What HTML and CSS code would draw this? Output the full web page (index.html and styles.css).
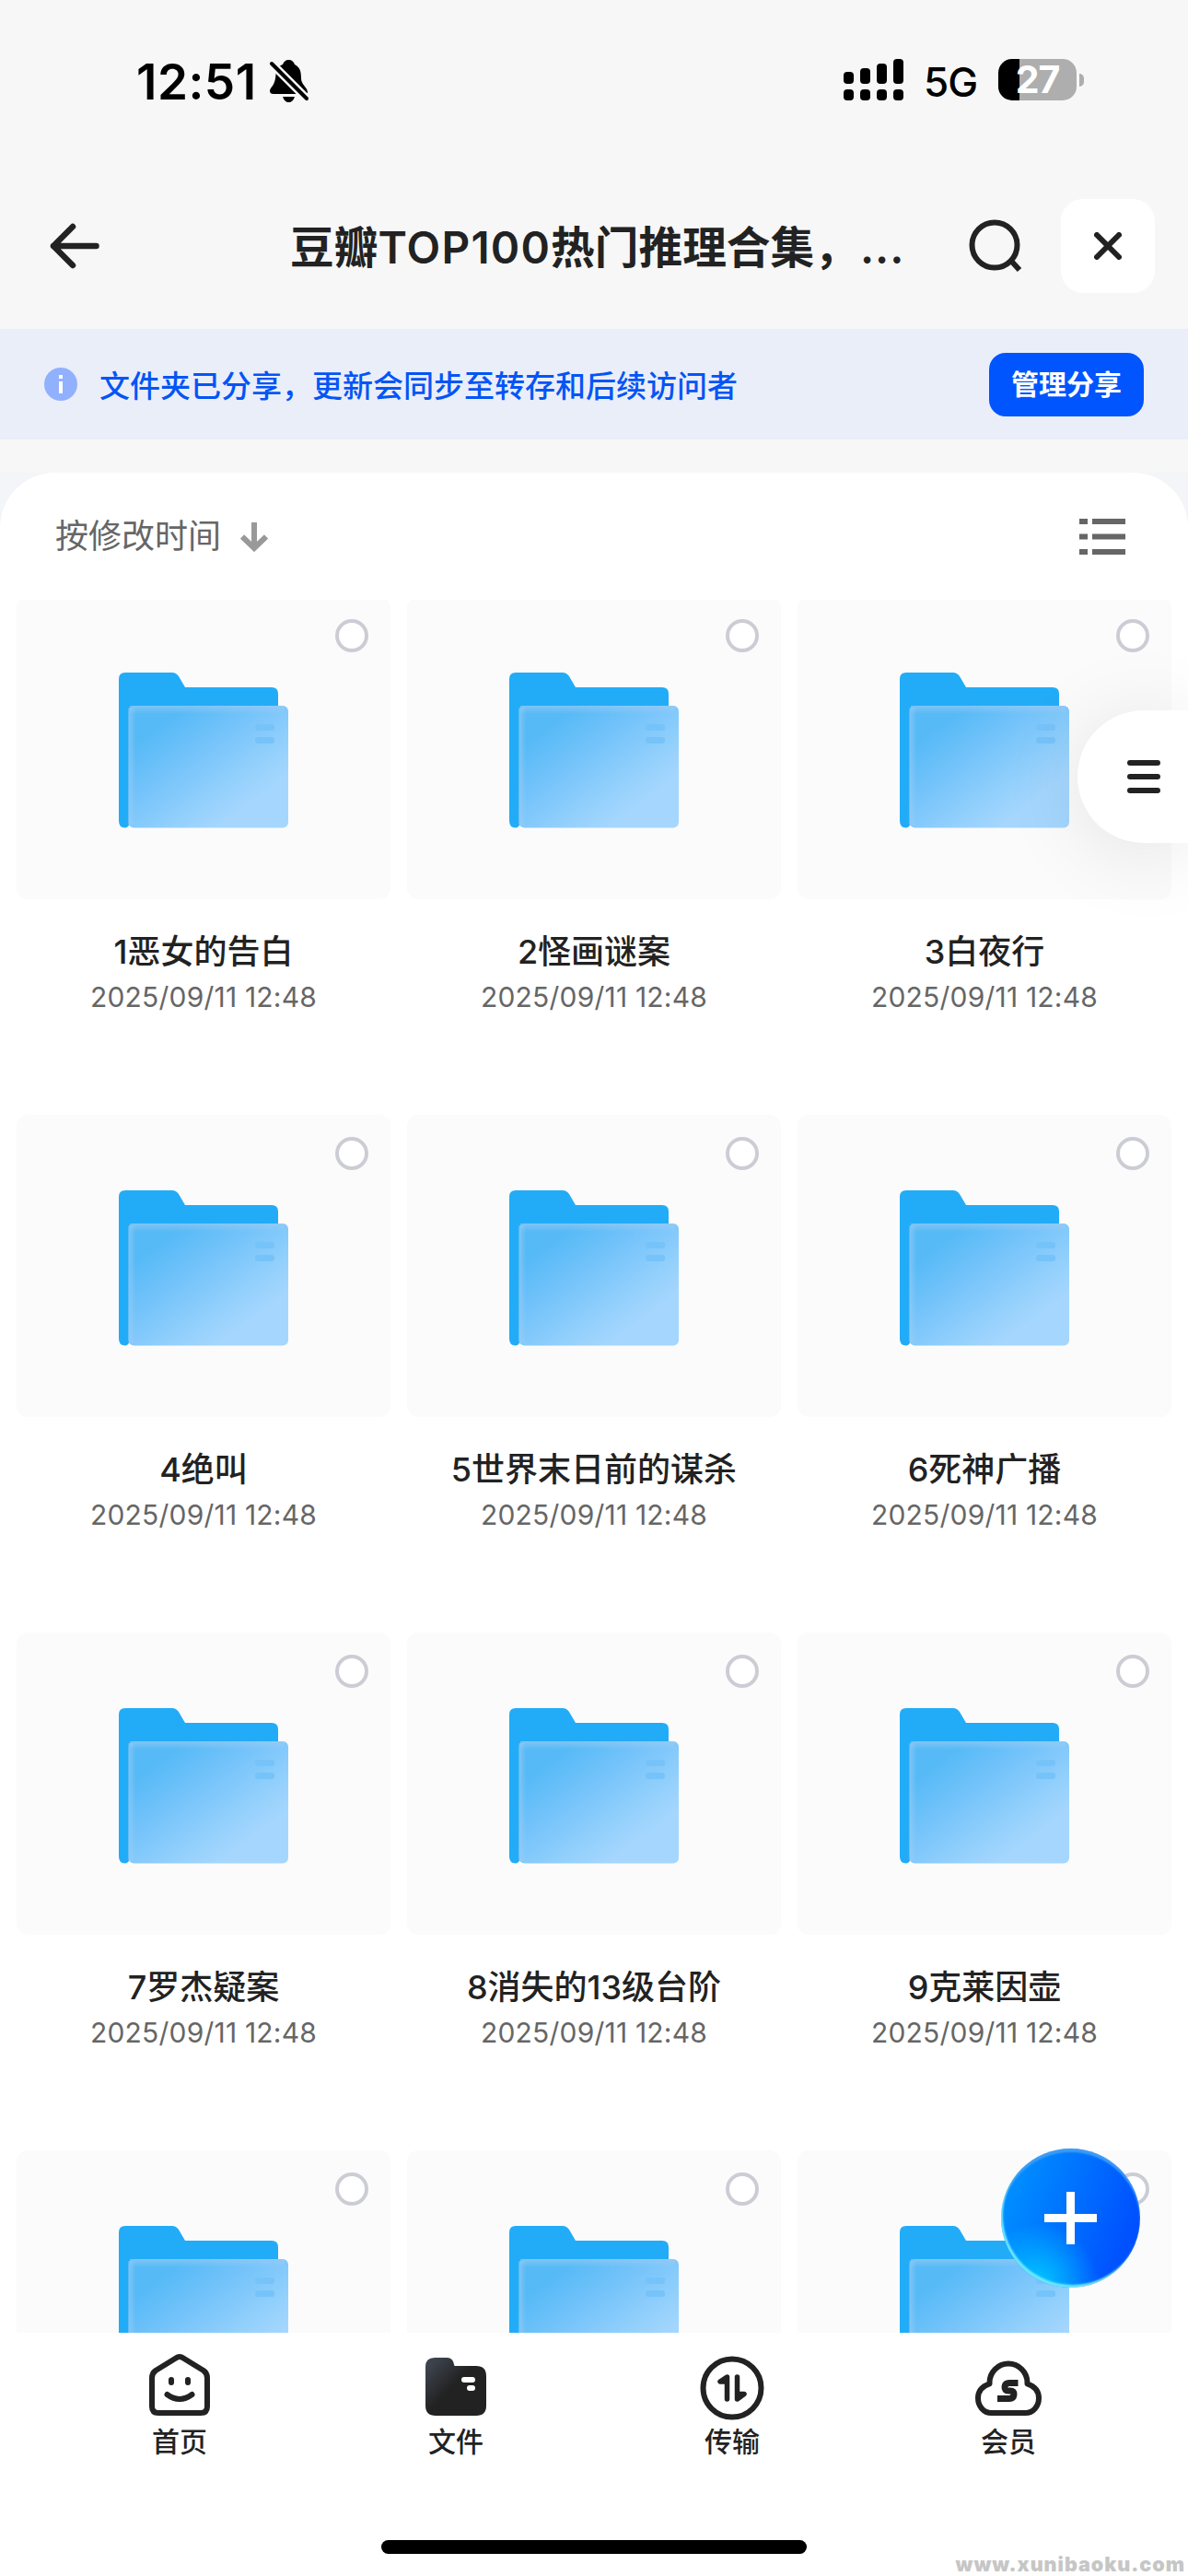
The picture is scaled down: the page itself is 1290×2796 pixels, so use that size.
FILE: index.html
```html
<!DOCTYPE html>
<html lang="zh-CN">
<head>
<meta charset="utf-8">
<title>豆瓣TOP100热门推理合集</title>
<link rel="stylesheet" href="styles.css">
</head>
<body>
<svg class="defs" width="0" height="0" aria-hidden="true">
  <defs>
    <linearGradient id="front" x1="0.08" y1="0.15" x2="0.85" y2="0.95">
      <stop offset="0.08" stop-color="#56baf6"/>
      <stop offset="0.36" stop-color="#74c3fa"/>
      <stop offset="0.66" stop-color="#93d0fc"/>
      <stop offset="0.84" stop-color="#a4d6fe"/>
      <stop offset="1" stop-color="#a4d6fe"/>
    </linearGradient>
    <linearGradient id="edgeLeft" x1="0" y1="0" x2="1" y2="0">
      <stop offset="0" stop-color="#a4cdf4" stop-opacity=".55"/>
      <stop offset="1" stop-color="#a4cdf4" stop-opacity="0"/>
    </linearGradient>
    <linearGradient id="edgeTop" x1="0" y1="0" x2="0" y2="1">
      <stop offset="0" stop-color="#a4cdf4" stop-opacity=".55"/>
      <stop offset="1" stop-color="#a4cdf4" stop-opacity="0"/>
    </linearGradient>
    <symbol id="folder" viewBox="0 0 184 169">
      <path fill="#22acf8" d="M7 0H58Q62 0 65 4L72 16H166Q173 16 173 23V160H14Q11 168.500 7 168.500Q0 168.500 0 161V7Q0 0 7 0Z"/>
      <rect x="10.500" y="36" width="173.500" height="132.500" rx="6" fill="url(#front)"/>
      <rect x="10.500" y="38" width="8" height="128" fill="url(#edgeLeft)"/>
      <rect x="12" y="36" width="168" height="9" fill="url(#edgeTop)"/>
      <rect x="148" y="56" width="21" height="7" rx="3" fill="#76c3f9"/>
      <rect x="148" y="70" width="21" height="7" rx="3" fill="#76c3f9"/>
    </symbol>
  </defs>
</svg>
<div class="screen">
  <header class="status">
    <span class="time">12:51</span>
    <svg class="bell" viewBox="0 0 42 46">
      <path d="M20.500 0C24 0 26 2 27 5C33 8 34 13 34 20C34 27 41 30 41 35Q41 37 38 37H4Q0 37 0 33.500C0 30 6 28 6.500 16C6.500 10 9 7 14 5C15 2 17 0 20.500 0Z"/>
      <path d="M14 40H27Q25 46 20.500 46Q16 46 14 40Z"/>
      <path class="cut" d="M2 4L41 43"/>
      <path class="slash" d="M2 4L40 42"/>
    </svg>
    <div class="status-right">
      <svg class="signal" viewBox="0 0 65 45">
        <rect x="0" y="14" width="11" height="13" rx="4"/><rect x="18" y="10" width="11" height="17" rx="4"/><rect x="36" y="5" width="11" height="22" rx="4"/><rect x="54" y="0" width="11" height="27" rx="4"/>
        <rect x="0" y="33" width="11" height="12" rx="4"/><rect x="18" y="33" width="11" height="12" rx="4"/><rect x="36" y="33" width="11" height="12" rx="4"/><rect x="54" y="33" width="11" height="12" rx="4"/>
      </svg>
      <span class="net">5G</span>
      <span class="battery">27</span>
      <span class="nub"></span>
    </div>
  </header>
  <div class="titlebar">
    <svg class="back" viewBox="0 0 54 50"><path d="M25 4L4 25L25 46M4 25H50.500"/></svg>
    <h1 class="title">豆瓣<span class="latin">TOP100</span>热门推理合集，<span class="dots">...</span></h1>
    <svg class="search" viewBox="0 0 60 60"><circle cx="28" cy="28" r="24.500"/><path d="M44 43L55 55"/></svg>
    <span class="close"><svg viewBox="0 0 30 30"><path d="M3 3L27 27M27 3L3 27"/></svg></span>
  </div>
  <div class="banner">
    <svg class="info" viewBox="0 0 36 36"><circle cx="18" cy="18" r="18"/><path d="M16 8H20V12H16ZM16 15H20V28H16Z"/></svg>
    <p class="notice">文件夹已分享，更新会同步至转存和后续访问者</p>
    <span class="manage">管理分享</span>
  </div>
  <main class="backdrop">
    <section class="panel">
      <div class="toolbar">
        <span class="sort">按修改时间</span>
        <svg class="down" viewBox="0 0 30 32"><path d="M15 0V28M2 15.500L15 28L28 15.500"/></svg>
        <svg class="list" viewBox="0 0 50 39"><path d="M0 3H9M14 3H50M0 19.500H9M14 19.500H50M0 36H9M14 36H50"/></svg>
      </div>
      <div class="files">
        <div class="grid">
          <article class="item"><div class="card"><i class="radio"></i><svg class="folder"><use href="#folder"/></svg></div><h2 class="name">1恶女的告白</h2><p class="date">2025/09/11 12:48</p></article>
          <article class="item"><div class="card"><i class="radio"></i><svg class="folder"><use href="#folder"/></svg></div><h2 class="name">2怪画谜案</h2><p class="date">2025/09/11 12:48</p></article>
          <article class="item"><div class="card"><i class="radio"></i><svg class="folder"><use href="#folder"/></svg></div><h2 class="name">3白夜行</h2><p class="date">2025/09/11 12:48</p></article>
          <article class="item"><div class="card"><i class="radio"></i><svg class="folder"><use href="#folder"/></svg></div><h2 class="name">4绝叫</h2><p class="date">2025/09/11 12:48</p></article>
          <article class="item"><div class="card"><i class="radio"></i><svg class="folder"><use href="#folder"/></svg></div><h2 class="name">5世界末日前的谋杀</h2><p class="date">2025/09/11 12:48</p></article>
          <article class="item"><div class="card"><i class="radio"></i><svg class="folder"><use href="#folder"/></svg></div><h2 class="name">6死神广播</h2><p class="date">2025/09/11 12:48</p></article>
          <article class="item"><div class="card"><i class="radio"></i><svg class="folder"><use href="#folder"/></svg></div><h2 class="name">7罗杰疑案</h2><p class="date">2025/09/11 12:48</p></article>
          <article class="item"><div class="card"><i class="radio"></i><svg class="folder"><use href="#folder"/></svg></div><h2 class="name">8消失的13级台阶</h2><p class="date">2025/09/11 12:48</p></article>
          <article class="item"><div class="card"><i class="radio"></i><svg class="folder"><use href="#folder"/></svg></div><h2 class="name">9克莱因壶</h2><p class="date">2025/09/11 12:48</p></article>
          <article class="item"><div class="card"><i class="radio"></i><svg class="folder"><use href="#folder"/></svg></div></article>
          <article class="item"><div class="card"><i class="radio"></i><svg class="folder"><use href="#folder"/></svg></div></article>
          <article class="item"><div class="card"><i class="radio"></i><svg class="folder"><use href="#folder"/></svg></div></article>
        </div>
      </div>
    </section>
  </main>
  <nav class="tabs">
    <a class="tab"><svg viewBox="0 0 72 72">
      <path class="line" d="M32 6.500Q36 3.500 40 6.500L62 20Q66 23 66 28V59Q66 66 59 66H13Q6 66 6 59V28Q6 23 10 20Z"/>
      <path class="line" d="M27 30V33M45 30V33M22.500 46Q36 56 49.500 46"/></svg><span>首页</span></a>
    <a class="tab"><svg viewBox="0 0 72 72">
      <defs><linearGradient id="dark" x1="0" y1="0.100" x2="0.550" y2="0.600"><stop offset="0.100" stop-color="#3d434d"/><stop offset="0.800" stop-color="#222"/></linearGradient></defs>
      <path fill="url(#dark)" d="M13 6H26Q31 6 33 10L34.500 15H58Q69 15 69 26V58Q69 69 58 69H14Q3 69 3 58V16Q3 6 13 6Z"/>
      <rect x="42" y="27" width="15" height="6" rx="3" fill="#fff"/><rect x="48" y="36" width="9" height="6" rx="3" fill="#fff"/></svg><span>文件</span></a>
    <a class="tab"><svg viewBox="0 0 72 72">
      <circle class="line" cx="36" cy="39" r="31.500"/>
      <path class="arrows" d="M30.500 51V27L23 32H30.500M41.500 27V51L49 45.500H41.500"/></svg><span>传输</span></a>
    <a class="tab"><svg viewBox="0 0 72 72">
      <path class="line" d="M17.500 66H54.500C63 66 69 58.500 69 50C69 42 64.500 37 56.500 34.500V33A20.500 20.500 0 0 0 15.500 33V34.500C7.500 37 3 42 3 50C3 58.500 9 66 17.500 66Z"/>
      <path class="mark" d="M46.500 33.500H37Q32.500 33.500 32 37.500Q31.500 42 36 42H38Q42.500 42 42 46Q41.500 50.500 37 50.500H24"/></svg><span>会员</span></a>
  </nav>
  <div class="home-bar"></div>
  <div class="side-pill"><svg viewBox="0 0 36 36"><path d="M3 3H33M3 18H33M3 33H33"/></svg></div>
  <div class="fab"><svg viewBox="0 0 57 57"><path d="M28.500 0V57M0 28.500H57"/></svg></div>
  <div class="watermark">www.xunibaoku.com</div>
</div>
</body>
</html>
```

FILE: styles.css
```css
* { box-sizing: border-box; margin: 0; padding: 0; }
body { background: #fff; font-family: Inter, "Noto Sans CJK SC", sans-serif; color: #222; }
svg { display: block; flex: none; }
.defs { position: absolute; }
.screen { position: relative; width: 1290px; height: 2796px; overflow: hidden; display: flex; flex-direction: column; background: #f7f7f7; }

.status { height: 177px; padding: 64px 113px 0 148px; display: flex; align-items: flex-start; color: #000; }
.time { font-size: 53px; line-height: 50px; font-weight: 600; width: 143px; letter-spacing: 0.5px; white-space: nowrap; }
.bell { width: 42px; height: 46px; margin: 1px 0 0 2px; overflow: visible; }
.bell .cut { stroke: #f7f7f7; stroke-width: 9; }
.bell .slash { stroke: #000; stroke-width: 4; stroke-linecap: round; }
.status-right { margin-left: auto; display: flex; align-items: center; height: 45px; }
.signal { width: 65px; height: 45px; }
.net { width: 103px; padding-left: 22px; font-size: 44px; line-height: 45px; padding-top: 6px; letter-spacing: -1px; font-weight: 450; }
.battery { width: 85px; height: 45px; border-radius: 15px; background: linear-gradient(90deg, #000 23px, #aeaeae 23px); color: #fff; font-size: 41px; line-height: 45px; font-weight: 700; text-align: center; letter-spacing: -1px; }
.nub { width: 5px; height: 14px; margin-left: 3px; border-radius: 0 5px 5px 0; background: #aeaeae; }

.titlebar { height: 180px; padding: 0 36px 0 54px; display: flex; align-items: center; }
.back { width: 54px; height: 50px; fill: none; stroke: #222; stroke-width: 6.5; stroke-linecap: round; stroke-linejoin: round; }
.title { margin-left: 207px; width: 700px; padding-top: 3px; font-size: 47.7px; line-height: 60px; font-weight: 600; white-space: nowrap; }
.latin { letter-spacing: 1.2px; }
.dots { margin-left: 2px; letter-spacing: 1px; }
.search { width: 60px; height: 60px; margin-left: 37px; margin-top: 1px; fill: none; stroke: #222; stroke-width: 6; }
.close { width: 102px; height: 102px; margin-left: auto; border-radius: 24px; background: #fff; display: grid; place-items: center; }
.close svg { width: 30px; height: 30px; stroke: #222; stroke-width: 6; stroke-linecap: round; }

.banner { height: 120px; padding: 0 48px; display: flex; align-items: center; background: #eaeef9; }
.info { width: 36px; height: 36px; }
.info circle { fill: #91b1ff; }
.info path { fill: #fff; }
.notice { margin-left: 24px; padding-top: 4px; font-size: 33px; line-height: 48px; font-weight: 500; color: #0455f5; white-space: nowrap; }
.manage { margin-left: auto; width: 168px; height: 69px; border-radius: 18px; background: #0155ff; color: #fff; font-size: 30px; font-weight: 700; line-height: 68px; text-align: center; }

.backdrop { height: 2019px; margin-top: 36px; background: #f4f5f8; }
.panel { height: 100%; background: #fff; border-radius: 60px 60px 0 0; }
.toolbar { height: 138px; padding: 0 68px 0 60px; display: flex; align-items: center; }
.sort { font-size: 36px; line-height: 48px; color: #666; }
.down { width: 30px; height: 32px; margin-left: 21px; margin-top: 2px; fill: none; stroke: #999; stroke-width: 6; }
.list { width: 50px; height: 39px; margin-left: auto; stroke: #666; stroke-width: 6; }
.files { height: 1881px; overflow: hidden; }
.grid { margin-top: -3px; padding: 0 18px; display: grid; grid-template-columns: repeat(3, 406px); grid-auto-rows: 562px; column-gap: 18px; }
.item { text-align: center; }
.card { position: relative; height: 328px; border-radius: 12px; background: #fbfbfc; padding-top: 82px; }
.radio { position: absolute; top: 24px; right: 24px; width: 36px; height: 36px; border: 4px solid #cccdd4; border-radius: 50%; background: #fff; }
.folder { width: 184px; height: 169px; margin: 0 auto; }
.name { margin-top: 32px; font-size: 36px; line-height: 50px; font-weight: 500; white-space: nowrap; }
.date { margin-top: 4px; font-size: 30px; line-height: 40px; letter-spacing: 0.2px; color: #666; white-space: nowrap; }

.tabs { height: 225px; padding: 21px 45px 0; display: flex; background: #fff; }
.tab { width: 300px; display: flex; flex-direction: column; align-items: center; font-size: 30px; line-height: 44px; font-weight: 500; }
.tab svg { width: 72px; height: 72px; margin-bottom: 3px; overflow: visible; }
.line { fill: none; stroke: #222; stroke-width: 6; stroke-linecap: round; stroke-linejoin: round; }
.arrows { fill: #222; stroke: #222; stroke-width: 5.5; stroke-linecap: round; stroke-linejoin: round; }
.mark { fill: none; stroke: #222; stroke-width: 7; }
.home-bar { height: 39px; background: #fff; }
.home-bar::before { content: ""; display: block; width: 462px; height: 15px; margin: 0 auto; border-radius: 8px; background: #000; }

.side-pill { position: absolute; top: 771px; right: 0; width: 120px; height: 144px; border-radius: 72px 0 0 72px; background: #fff; box-shadow: 0 9px 90px rgba(0,0,0,.1); display: flex; align-items: center; padding-left: 54px; }
.side-pill svg { width: 36px; height: 36px; stroke: #222; stroke-width: 6; stroke-linecap: round; }
.fab { position: absolute; left: 1087px; top: 2332px; width: 151px; height: 151px; border-radius: 50%; display: grid; place-items: center; background: radial-gradient(circle at 26% 98%, #00c8ff 0, rgba(0,190,255,0) 36%), linear-gradient(110deg, #008cff 15%, #0050ff 85%); box-shadow: inset 2px -3px 2px #6be6ff, inset 0 4px 2px #3d9cf5; }
.fab svg { width: 57px; height: 57px; stroke: #fff; stroke-width: 9; }
.watermark { position: absolute; right: 3px; top: 2770px; font: 900 21.5px/26px Inter, sans-serif; letter-spacing: 1px; color: #c6c6c6; white-space: nowrap; }
```
